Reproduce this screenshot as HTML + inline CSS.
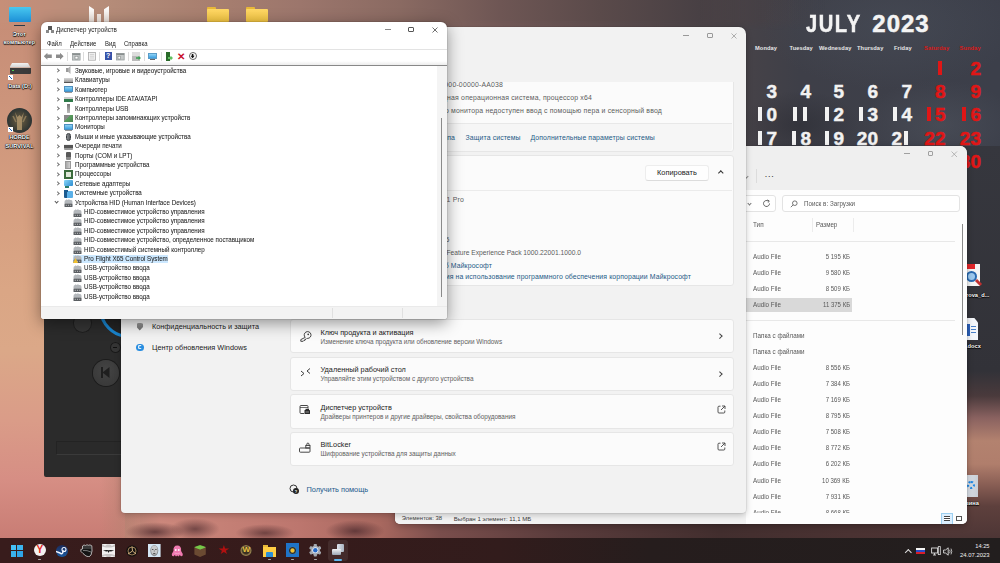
<!DOCTYPE html>
<html><head><meta charset="utf-8">
<style>
*{margin:0;padding:0;box-sizing:border-box}
html,body{width:1000px;height:563px;overflow:hidden;font-family:"Liberation Sans",sans-serif}
body{position:relative;background:#b8806f}
.a{position:absolute}
.t{position:absolute;white-space:nowrap;line-height:1}
#bg{left:0;top:0;width:1000px;height:563px;overflow:hidden}
.card{background:#fbfbfb;border:1px solid #e6e6e6;border-radius:3px}
.sv{font-size:6.9px;letter-spacing:0.18px;color:#5c5c5c;margin-top:1.2px}
.sl{font-size:6.9px;letter-spacing:0.1px;color:#245a86;margin-top:1.2px}
.sn{font-size:7.3px;color:#1b1b1b}
.st{font-size:7.3px;color:#1b1b1b}
.ss{font-size:6.4px;color:#606060}
.exr{transform:scaleX(0.9)!important;transform-origin:100% 0!important}
.ex{font-size:6.7px;color:#585858;transform:scaleX(0.94);transform-origin:0 0;margin-top:0.7px}
.dl{font-size:5.7px;font-weight:bold;color:#fff;text-shadow:0 0 1px #000,0 0 1px #000,0 1px 1px #000}
.cd{top:45.8px;font-size:5.7px;letter-spacing:0.1px;font-weight:bold}
.cn{font-size:19px;font-weight:bold;-webkit-text-stroke:0.45px currentColor}
.one{display:inline-block;width:10px;height:13.4px;vertical-align:-0.2px;background:linear-gradient(90deg,transparent 0 1.6px,currentColor 1.6px 6.2px,transparent 6.2px)}
.tind{top:21px;width:3px;height:1.4px;background:#aaa;border-radius:1px}
.dm{font-size:7px;color:#1c1c1c;transform:scaleX(0.89);transform-origin:0 0;margin-top:-0.5px;-webkit-text-stroke:0.05px #1c1c1c}
.mn{top:19.3px;font-size:6.8px;color:#1c1c1c;transform:scaleX(0.88);transform-origin:0 0}
.tsep{top:29.6px;width:1px;height:9.2px;background:#dcdcdc}
.chev{width:3.2px;height:3.2px;border-right:1px solid #777;border-top:1px solid #777;transform:rotate(45deg)}
.chevd{width:3.2px;height:3.2px;border-right:1px solid #555;border-bottom:1px solid #555;transform:rotate(45deg)}
</style></head><body>
<div id="bg" class="a">
  <div class="a" style="left:0;top:0;width:1000px;height:563px;background:linear-gradient(90deg,#c48b77 0%,#b88373 8%,#a77a6d 20%,#93706a 35%,#7a5f5d 50%,#5f5052 62%,#4a4448 72%,#3e3f48 80%,#3c3f4a 100%)"></div>
  <!-- left column -->
  <div class="a" style="left:0;top:0;width:125px;height:540px;background:linear-gradient(180deg,#c58c76 0px,#cc947b 100px,#d59e80 200px,#daa685 290px,#dba888 350px,#da9c88 420px,#d68e84 480px,#c87c74 540px)"></div>
  <div class="a" style="left:100px;top:0;width:40px;height:540px;background:linear-gradient(90deg,rgba(0,0,0,0),rgba(185,130,114,1))"></div>
  <!-- top strip -->
  <div class="a" style="left:0;top:0;width:825px;height:30px;background:linear-gradient(90deg,#c68f78 0px,#c08e7a 40px,#b88e7a 90px,#b08876 140px,#a98070 200px,#9c766c 300px,#8a6a62 400px,#6e5654 500px,#5a4a4a 600px,#484044 700px,rgba(60,61,68,0) 825px);-webkit-mask-image:linear-gradient(180deg,#000 0,#000 20px,transparent 30px)"></div>
  <!-- bottom strip -->
  <div class="a" style="left:0;top:470px;width:1000px;height:70px;background:linear-gradient(90deg,rgba(200,125,112,0) 0%,rgba(200,125,112,0) 12%,#cc887c 16%,#bc766e 30%,#a8685f 38%,#7a4e4c 44%,#5a3c3c 56%,#422e2e 72%,#4a3232 85%,#4e3434 100%)"></div>
  <div class="a" style="left:125px;top:522px;width:60px;height:20px;border-radius:50%;background:radial-gradient(ellipse at center,rgba(80,45,48,.8),rgba(80,45,48,0) 70%)"></div>
  <div class="a" style="left:170px;top:518px;width:50px;height:22px;border-radius:50%;background:radial-gradient(ellipse at center,rgba(80,45,48,.7),rgba(80,45,48,0) 70%)"></div>
  <div class="a" style="left:235px;top:524px;width:60px;height:18px;border-radius:50%;background:radial-gradient(ellipse at center,rgba(85,48,50,.75),rgba(85,48,50,0) 70%)"></div>
  <div class="a" style="left:325px;top:520px;width:60px;height:22px;border-radius:50%;background:radial-gradient(ellipse at center,rgba(80,45,48,.8),rgba(80,45,48,0) 70%)"></div>
  <!-- calendar texture -->
  <div class="a" style="left:760px;top:-40px;width:260px;height:130px;border-radius:50%;background:radial-gradient(ellipse at center,rgba(80,88,100,.35),rgba(80,88,100,0) 70%)"></div>
  <div class="a" style="left:740px;top:90px;width:120px;height:70px;border-radius:50%;background:radial-gradient(ellipse at center,rgba(30,30,36,.35),rgba(30,30,36,0) 70%)"></div>
  <div class="a" style="left:860px;top:80px;width:160px;height:90px;border-radius:50%;background:radial-gradient(ellipse at center,rgba(90,96,106,.35),rgba(90,96,106,0) 70%)"></div>
  <!-- right strip -->
  <div class="a" style="left:940px;top:146px;width:60px;height:394px;background:linear-gradient(180deg,#36373e 0px,#323238 225px,#4a3a3c 250px,#8a6260 272px,#b3826f 295px,#b07e6c 318px,#8a5f55 338px,#5e403d 360px,#4c3535 394px)"></div>
</div>

<!-- desktop icons left -->
<div id="desk-left">
  <!-- this PC -->
  <div class="a" style="left:9px;top:6.5px;width:21.5px;height:15px;background:linear-gradient(180deg,#48c8f0,#1d8fd6);border-radius:1px"></div>
  <div class="a" style="left:14px;top:25px;width:11px;height:1.2px;background:#2a3a4a"></div>
  <div class="t dl" style="left:0;width:39px;text-align:center;top:31.8px">Этот</div>
  <div class="t dl" style="left:0;width:39px;text-align:center;top:39.8px">компьютер</div>
  <!-- drive -->
  <div class="a" style="left:9.5px;top:63px;width:21px;height:4.5px;background:linear-gradient(#f2f2f2,#cfcfcf);clip-path:polygon(12% 0,88% 0,100% 100%,0 100%)"></div>
  <div class="a" style="left:9.5px;top:67.5px;width:21px;height:6px;background:#3b3b3b;border-radius:0 0 1px 1px"></div>
  <div class="a" style="left:12px;top:69.5px;width:1.5px;height:1.5px;background:#4fd04f"></div>
  <div class="a" style="left:7.5px;top:74.5px;width:5.5px;height:5.5px;background:#fff"></div>
  <div class="a" style="left:8.5px;top:75.5px;width:3.5px;height:3.5px;background:linear-gradient(45deg,transparent 40%,#1a5fb4 40% 60%,transparent 60%)"></div>
  <div class="t dl" style="left:0;width:40px;text-align:center;top:83.8px">Data (D:)</div>
  <!-- horde -->
  <div class="a" style="left:7px;top:108px;width:25px;height:25px;border-radius:50%;background:radial-gradient(circle at 50% 50%,#6a6048 0%,#4a4638 40%,#2c3434 70%,#1a2224 100%)"></div>
  <svg class="a" style="left:7px;top:108px" width="25" height="25" viewBox="0 0 25 25"><path d="M8 4 L10 12 L10 22 L15 22 L15 12 L17 4 L14.5 9 L12.5 7 L10.5 9 Z" fill="#a89068" opacity="0.9"/><path d="M6 8 L9 14 M19 8 L16 14" stroke="#8a7858" stroke-width="1.6"/></svg>
  <div class="a" style="left:7.5px;top:126.5px;width:5.5px;height:5.5px;background:#fff"></div>
  <div class="a" style="left:8.5px;top:127.5px;width:3.5px;height:3.5px;background:linear-gradient(45deg,transparent 40%,#1a5fb4 40% 60%,transparent 60%)"></div>
  <div class="t dl" style="left:0;width:39px;text-align:center;top:135.2px">HORDE</div>
  <div class="t dl" style="left:0;width:39px;text-align:center;top:144.2px">SURVIVAL</div>
  <!-- top icons -->
  <div class="a" style="left:89px;top:6px;width:5px;height:16px;background:linear-gradient(#fff,#eadfd8);clip-path:polygon(0 0,100% 20%,100% 100%,0 100%)"></div>
  <div class="a" style="left:97px;top:14px;width:4px;height:8px;background:#efe5df"></div>
  <div class="a" style="left:104px;top:6px;width:5px;height:16px;background:linear-gradient(#fff,#eadfd8);clip-path:polygon(0 20%,100% 0,100% 100%,0 100%)"></div>
  <div class="a" style="left:207px;top:7px;width:9px;height:3px;background:#e8b838;border-radius:1px 1px 0 0"></div>
  <div class="a" style="left:207px;top:9px;width:22px;height:13px;background:linear-gradient(#ffd866,#f2c440);border-radius:1px"></div>
  <div class="a" style="left:246px;top:7px;width:9px;height:3px;background:#e8b838;border-radius:1px 1px 0 0"></div>
  <div class="a" style="left:246px;top:9px;width:22px;height:13px;background:linear-gradient(#ffd866,#f2c440);border-radius:1px"></div>
  <!-- right desktop icons -->
  <div class="a" style="left:967px;top:264px;width:13px;height:22px;background:#f4f4f4"></div>
  <div class="a" style="left:967px;top:264px;width:8px;height:5px;background:#e0262a"></div>
  <div class="a" style="left:966px;top:271px;width:11px;height:11px;border-radius:50%;border:2px solid #2a6ab0;background:#9cc8ee"></div>
  <div class="a" style="left:975px;top:281px;width:7px;height:3px;background:#c03030;transform:rotate(45deg)"></div>
  <div class="t dl" style="left:966px;top:292.5px">rova_d...</div>
  <div class="a" style="left:966px;top:318px;width:12px;height:22px;background:#f4f6fa;clip-path:polygon(0 0,70% 0,100% 20%,100% 100%,0 100%)"></div>
  <div class="a" style="left:966px;top:324px;width:4px;height:12px;background:#2b5fb8"></div>
  <div class="a" style="left:971px;top:326px;width:5px;height:1px;background:#4a80c8;box-shadow:0 3px 0 #4a80c8,0 6px 0 #4a80c8"></div>
  <div class="t dl" style="left:966px;top:344px">.docx</div>
  <div class="a" style="left:966px;top:475px;width:12px;height:22px;background:linear-gradient(90deg,#dde3ea,#c8ced6)"></div>
  <div class="a" style="left:967px;top:481px;width:8px;height:8px;border-radius:50%;border:2px dotted #1e88e5"></div>
  <div class="t dl" style="left:966px;top:500.5px">зина</div>
</div>
<!-- calendar -->
<div id="cal">
  <div class="t" style="left:806px;top:11.8px;font-size:24px;font-weight:bold;color:#f4f4f4;letter-spacing:1.8px;transform:scaleX(0.84);transform-origin:0 0;-webkit-text-stroke:0.5px #f4f4f4">JULY</div>
  <div class="t" style="left:872.3px;top:11.8px;font-size:24px;font-weight:bold;color:#f4f4f4;letter-spacing:1px;-webkit-text-stroke:0.5px #f4f4f4">2023</div>
  <div class="t cd" style="left:755px;color:#e8e8e8">Monday</div>
  <div class="t cd" style="left:789.5px;color:#e8e8e8">Tuesday</div>
  <div class="t cd" style="left:819px;color:#e8e8e8">Wednesday</div>
  <div class="t cd" style="left:857px;color:#e8e8e8">Thursday</div>
  <div class="t cd" style="left:894px;color:#e8e8e8">Friday</div>
  <div class="t cd" style="left:924px;color:#d81818">Saturday</div>
  <div class="t cd" style="left:959.5px;color:#d81818">Sunday</div>
  <div class="t cn" style="right:54.5px;top:58.7px;color:#e01616"><span class="one"></span></div>
  <div class="t cn" style="right:19px;top:58.7px;color:#e01616">2</div>
  <div class="t cn" style="right:223px;top:82.2px;color:#f2f2f2">3</div>
  <div class="t cn" style="right:189px;top:82.2px;color:#f2f2f2">4</div>
  <div class="t cn" style="right:156px;top:82.2px;color:#f2f2f2">5</div>
  <div class="t cn" style="right:122px;top:82.2px;color:#f2f2f2">6</div>
  <div class="t cn" style="right:88px;top:82.2px;color:#f2f2f2">7</div>
  <div class="t cn" style="right:54.5px;top:82.2px;color:#e01616">8</div>
  <div class="t cn" style="right:19px;top:82.2px;color:#e01616">9</div>
  <div class="t cn" style="right:223px;top:104.5px;color:#f2f2f2"><span class="one"></span>0</div>
  <div class="t cn" style="right:189px;top:104.5px;color:#f2f2f2"><span class="one"></span><span class="one"></span></div>
  <div class="t cn" style="right:156px;top:104.5px;color:#f2f2f2"><span class="one"></span>2</div>
  <div class="t cn" style="right:122px;top:104.5px;color:#f2f2f2"><span class="one"></span>3</div>
  <div class="t cn" style="right:88px;top:104.5px;color:#f2f2f2"><span class="one"></span>4</div>
  <div class="t cn" style="right:54.5px;top:104.5px;color:#e01616"><span class="one"></span>5</div>
  <div class="t cn" style="right:19px;top:104.5px;color:#e01616"><span class="one"></span>6</div>
  <div class="t cn" style="right:223px;top:128.5px;color:#f2f2f2"><span class="one"></span>7</div>
  <div class="t cn" style="right:189px;top:128.5px;color:#f2f2f2"><span class="one"></span>8</div>
  <div class="t cn" style="right:156px;top:128.5px;color:#f2f2f2"><span class="one"></span>9</div>
  <div class="t cn" style="right:122px;top:128.5px;color:#f2f2f2">20</div>
  <div class="t cn" style="right:88px;top:128.5px;color:#f2f2f2">2<span class="one"></span></div>
  <div class="t cn" style="right:54.5px;top:128.5px;color:#e01616">22</div>
  <div class="t cn" style="right:19px;top:128.5px;color:#e01616">23</div>
  <div class="t cn" style="right:223px;top:151.7px;color:#f2f2f2">24</div>
  <div class="t cn" style="right:189px;top:151.7px;color:#f2f2f2">25</div>
  <div class="t cn" style="right:156px;top:151.7px;color:#f2f2f2">26</div>
  <div class="t cn" style="right:122px;top:151.7px;color:#f2f2f2">27</div>
  <div class="t cn" style="right:88px;top:151.7px;color:#f2f2f2">28</div>
  <div class="t cn" style="right:54.5px;top:151.7px;color:#e01616">29</div>
  <div class="t cn" style="right:19px;top:151.7px;color:#e01616">30</div>
</div>

<!-- media widget -->
<div class="a" style="left:44px;top:300px;width:80px;height:177px;background:#2b2b2b;border-radius:2px;overflow:hidden">
  <div class="a" style="left:28.7px;top:13.4px;width:19.2px;height:19.2px;border-radius:50%;background:#353535;box-shadow:inset 0 0 0 1px #1e1e1e"></div>
  <div class="a" style="left:55px;top:-22px;width:60px;height:60px;border-radius:50%;border:3.4px solid #1a86d0;box-sizing:border-box;background:#242424"></div>
  <div class="a" style="left:65.5px;top:41.5px;width:11px;height:11px;border-radius:50%;background:#353535;box-shadow:inset 0 0 0 1px #1a1a1a"></div>
  <div class="a" style="left:69px;top:46.5px;width:4px;height:1px;background:#111"></div>
  <div class="a" style="left:48.5px;top:59.7px;width:26px;height:26px;border-radius:50%;background:radial-gradient(circle at 50% 40%,#444,#363636);box-shadow:0 0 0 1px #1c1c1c"></div>
  <div class="a" style="left:57px;top:67px;width:1.5px;height:11px;background:#1f1f1f"></div>
  <div class="a" style="left:58.5px;top:67px;width:7px;height:11px;background:#1f1f1f;clip-path:polygon(100% 0,0 50%,100% 100%)"></div>
  <div class="a" style="left:12px;top:140.6px;width:70px;height:14px;background:#2a2a2a;border:1px solid #232323;border-bottom-color:#3a3a3a"></div>
</div>

<!-- explorer window -->
<div id="explorer" class="a" style="left:395px;top:146px;width:572px;height:378px;background:#fdfdfd;border-radius:7px 7px 5px 5px;box-shadow:0 2px 6px rgba(0,0,0,.25),0 0 0 1px rgba(0,0,0,.05);overflow:hidden">
  <div class="a" style="left:0;top:0;width:572px;height:43.5px;background:#efefef"></div>
  <div class="a" style="left:509px;top:7px;width:6px;height:1px;background:#a0a0a0"></div>
  <div class="a" style="left:533.4px;top:5px;width:5px;height:5px;border:0.9px solid #a0a0a0;border-radius:1px"></div>
  <svg class="a" style="left:556px;top:4.6px" width="6.5" height="6.5" viewBox="0 0 7 7"><path d="M0.6 0.6 L6.4 6.4 M6.4 0.6 L0.6 6.4" stroke="#a0a0a0" stroke-width="0.8"/></svg>
  <div class="a" style="left:350px;top:28.5px;width:3px;height:3px;border-right:1px solid #888;border-bottom:1px solid #888;transform:rotate(45deg)"></div>
  <div class="a" style="left:361px;top:23px;width:1px;height:14px;background:#dcdcdc"></div>
  <div class="t" style="left:369.5px;top:26px;font-size:9px;color:#333;letter-spacing:0.2px">&middot;&middot;&middot;</div>
  <!-- address -->
  <div class="a" style="left:340px;top:49px;width:40.6px;height:17px;background:#fff;border:1px solid #e3e3e3;border-radius:3px"></div>
  <div class="a" style="left:353.4px;top:55.5px;width:3px;height:3px;border-right:1px solid #777;border-bottom:1px solid #777;transform:rotate(45deg)"></div>
  <svg class="a" style="left:367px;top:53px" width="9" height="9" viewBox="0 0 9 9"><path d="M7.5 4.5 A3 3 0 1 1 6.3 2.1" fill="none" stroke="#555" stroke-width="0.9"/><path d="M5.4 0.9 L7.2 1.9 L6.2 3.6" fill="none" stroke="#555" stroke-width="0.9"/></svg>
  <div class="a" style="left:387.4px;top:49px;width:178px;height:17px;background:#fff;border:1px solid #e3e3e3;border-radius:3px"></div>
  <svg class="a" style="left:394.5px;top:54px" width="8" height="8" viewBox="0 0 8 8"><circle cx="4.8" cy="3.2" r="2.3" fill="none" stroke="#666" stroke-width="0.9"/><path d="M3.2 4.8 L0.8 7.2" stroke="#666" stroke-width="0.9"/></svg>
  <div class="t" style="left:408.6px;top:55.2px;font-size:6.6px;color:#5a5a5a;transform:scaleX(0.95);transform-origin:0 0">Поиск в: Загрузки</div>
  <!-- header -->
  <div class="t ex" style="left:358.2px;top:75.6px;font-size:6.8px">Тип</div>
  <div class="a" style="left:417px;top:72px;width:1px;height:13.5px;background:#ececec"></div>
  <div class="t ex" style="left:420.6px;top:75.6px;font-size:6.6px">Размер</div>
  <div class="a" style="left:458px;top:72px;width:1px;height:13.5px;background:#ececec"></div>
  <div class="a" style="left:340px;top:95.2px;width:220px;height:1px;background:#e8e8e8"></div>
  <div class="a" style="left:340px;top:151.8px;width:117px;height:14.2px;background:#d9d9d9"></div>
  <div class="a" style="left:340px;top:174.3px;width:220px;height:1px;background:#e8e8e8"></div>
<div class="t ex" style="left:358px;top:107.1px">Audio File</div>
<div class="t ex exr" style="right:117px;top:107.1px">5 195 КБ</div>
<div class="t ex" style="left:358px;top:123.1px">Audio File</div>
<div class="t ex exr" style="right:117px;top:123.1px">9 580 КБ</div>
<div class="t ex" style="left:358px;top:139.1px">Audio File</div>
<div class="t ex exr" style="right:117px;top:139.1px">8 509 КБ</div>
<div class="t ex" style="left:358px;top:155.3px">Audio File</div>
<div class="t ex exr" style="right:117px;top:155.3px">11 375 КБ</div>
<div class="t ex" style="left:358px;top:186.0px">Папка с файлами</div>
<div class="t ex" style="left:358px;top:202.0px">Папка с файлами</div>
<div class="t ex" style="left:358px;top:218.0px">Audio File</div>
<div class="t ex exr" style="right:117px;top:218.0px">8 556 КБ</div>
<div class="t ex" style="left:358px;top:234.1px">Audio File</div>
<div class="t ex exr" style="right:117px;top:234.1px">7 384 КБ</div>
<div class="t ex" style="left:358px;top:250.1px">Audio File</div>
<div class="t ex exr" style="right:117px;top:250.1px">7 169 КБ</div>
<div class="t ex" style="left:358px;top:266.3px">Audio File</div>
<div class="t ex exr" style="right:117px;top:266.3px">8 795 КБ</div>
<div class="t ex" style="left:358px;top:282.4px">Audio File</div>
<div class="t ex exr" style="right:117px;top:282.4px">7 508 КБ</div>
<div class="t ex" style="left:358px;top:298.5px">Audio File</div>
<div class="t ex exr" style="right:117px;top:298.5px">8 772 КБ</div>
<div class="t ex" style="left:358px;top:314.7px">Audio File</div>
<div class="t ex exr" style="right:117px;top:314.7px">6 202 КБ</div>
<div class="t ex" style="left:358px;top:330.9px">Audio File</div>
<div class="t ex exr" style="right:117px;top:330.9px">10 369 КБ</div>
<div class="t ex" style="left:358px;top:347.1px">Audio File</div>
<div class="t ex exr" style="right:117px;top:347.1px">7 931 КБ</div>
<div class="t ex" style="left:358px;top:363.1px">Audio File</div>
<div class="t ex exr" style="right:117px;top:363.1px">8 668 КБ</div>
  <div class="a" style="left:340px;top:367px;width:232px;height:11px;background:#fdfdfd"></div>
  <!-- scrollbar -->
  <div class="a" style="left:566.5px;top:78px;width:1px;height:111px;background:#8a8a8a"></div>
  <!-- status -->
  <div class="a" style="left:0;top:366px;width:351px;height:12px;background:#f2f2f2"></div>
  <div class="t" style="left:6.8px;top:370.2px;font-size:5.9px;color:#3c3c3c">Элементов: 38</div>
  <div class="t" style="left:58.8px;top:370.2px;font-size:6.05px;color:#3c3c3c">Выбран 1 элемент: 11,1 МБ</div>
  <div class="a" style="left:546px;top:366.8px;width:11.7px;height:12px;background:#dcefff;border:1px solid #9ccff0"></div>
  <div class="a" style="left:549px;top:369.5px;width:6px;height:5px;border-top:1px solid #444;border-bottom:1px solid #444;background:linear-gradient(#fff 0 40%,#444 40% 60%,#fff 60%)"></div>
  <div class="a" style="left:560.5px;top:369.6px;width:6.5px;height:5.4px;border:1px solid #555"></div>
</div>

<!-- settings window -->
<div id="settings" class="a" style="left:121px;top:27px;width:625px;height:486px;background:#f2f2f2;border-radius:7px 7px 4px 4px;box-shadow:0 2px 6px rgba(0,0,0,.22),0 0 0 1px rgba(0,0,0,.05);overflow:hidden">
  <div class="a" style="left:561.7px;top:8px;width:6.3px;height:0.9px;background:#999"></div>
  <div class="a" style="left:586px;top:6px;width:6px;height:5px;border:0.9px solid #999;border-radius:1px"></div>
  <svg class="a" style="left:609.7px;top:5.6px" width="6" height="6" viewBox="0 0 7 7"><path d="M0.6 0.6 L6.4 6.4 M6.4 0.6 L0.6 6.4" stroke="#999" stroke-width="0.9"/></svg>
  <!-- nav -->
  <div class="a" style="left:15.5px;top:295.5px;width:6.5px;height:8px;background:linear-gradient(#9a9a9a,#6a6a6a);clip-path:polygon(0 15%,50% 0,100% 15%,100% 55%,50% 100%,0 55%)"></div>
  <div class="t sn" style="left:31px;top:296px">Конфиденциальность и защита</div>
  <div class="a" style="left:15px;top:316.6px;width:7.6px;height:7.6px;border-radius:50%;background:#2a8ee0"></div>
  <div class="a" style="left:16.8px;top:318.4px;width:4px;height:4px;border-radius:50%;border:1px solid #fff;border-right-color:transparent"></div>
  <div class="t sn" style="left:31px;top:316.6px">Центр обновления Windows</div>
  <!-- scroll viewport -->
  <div class="a" style="left:0;top:55px;width:625px;height:431px;overflow:hidden">
   <div class="a" style="left:0;top:-55px;width:625px;height:486px">
    <!-- card A -->
    <div class="a card" style="left:168.5px;top:20px;width:444.5px;height:105px"></div>
    <div class="a" style="left:169.5px;top:96px;width:441.5px;height:28px;background:#f6f6f6;border-top:1px solid #e8e8e8;border-radius:0 0 4px 4px"></div>
    <div class="t sv" style="right:243px;top:54px">00330-80000-00000-AA038</div>
    <div class="t sv" style="right:154px;top:67.3px">64-разрядная операционная система, процессор x64</div>
    <div class="t sv" style="right:84px;top:80.1px">Для этого монитора недоступен ввод с помощью пера и сенсорный ввод</div>
    <div class="t sl" style="right:291px;top:106.8px">Домен или рабочая группа</div>
    <div class="t sl" style="left:344.6px;top:106.8px">Защита системы</div>
    <div class="t sl" style="left:409.4px;top:106.8px">Дополнительные параметры системы</div>
    <!-- card B -->
    <div class="a card" style="left:168.5px;top:128px;width:444.5px;height:131px"></div>
    <div class="a" style="left:169.5px;top:163px;width:441.5px;height:1px;background:#ebebeb"></div>
    <div class="a" style="left:524px;top:138px;width:64px;height:16px;background:#fefefe;border:1px solid #ededed;border-bottom-color:#dcdcdc;border-radius:3px"></div>
    <div class="t" style="left:536px;top:141.6px;font-size:7.4px;color:#1b1b1b">Копировать</div>
    <div class="a" style="left:597.5px;top:144.2px;width:3.6px;height:3.6px;border-left:1px solid #333;border-top:1px solid #333;transform:rotate(45deg)"></div>
    <div class="t sv" style="right:282px;top:169.3px">Windows 11 Pro</div>
    <div class="t sv" style="right:296.4px;top:208.9px">22621.1105</div>
    <div class="t sv" style="right:165px;top:221.7px;font-size:6.7px;letter-spacing:0">Windows Feature Experience Pack 1000.22001.1000.0</div>
    <div class="t sl" style="right:254px;top:235px">Соглашение об использовании служб Майкрософт</div>
    <div class="t sl" style="right:55px;top:246.3px">Условия лицензионного соглашения на использование программного обеспечения корпорации Майкрософт</div>
    <!-- related cards -->
    <div class="a card" style="left:168.5px;top:291.6px;width:444.5px;height:34.4px"></div>
    <div class="a card" style="left:168.5px;top:329.5px;width:444.5px;height:34.5px"></div>
    <div class="a card" style="left:168.5px;top:367px;width:444.5px;height:34.5px"></div>
    <div class="a card" style="left:168.5px;top:404.5px;width:444.5px;height:34.5px"></div>
    <div class="t st" style="left:199.5px;top:301.8px">Ключ продукта и активация</div>
    <div class="t ss" style="left:199.5px;top:311.7px">Изменение ключа продукта или обновление версии Windows</div>
    <div class="t st" style="left:199.5px;top:339.1px">Удаленный рабочий стол</div>
    <div class="t ss" style="left:199.5px;top:349.3px">Управляйте этим устройством с другого устройства</div>
    <div class="t st" style="left:199.5px;top:376.8px">Диспетчер устройств</div>
    <div class="t ss" style="left:199.5px;top:386.6px">Драйверы принтеров и другие драйверы, свойства оборудования</div>
    <div class="t st" style="left:199.5px;top:414.3px">BitLocker</div>
    <div class="t ss" style="left:199.5px;top:424px">Шифрование устройства для защиты данных</div>
    <!-- chevrons -->
    <div class="a" style="left:596.5px;top:307.3px;width:3.6px;height:3.6px;border-right:1px solid #444;border-top:1px solid #444;transform:rotate(45deg)"></div>
    <div class="a" style="left:596.5px;top:344.8px;width:3.6px;height:3.6px;border-right:1px solid #444;border-top:1px solid #444;transform:rotate(45deg)"></div>
    <!-- external link icons -->
    <svg class="a" style="left:595.5px;top:377.5px" width="9" height="9" viewBox="0 0 9 9"><path d="M3.5 1.2 H2 A1 1 0 0 0 1 2.2 V7 A1 1 0 0 0 2 8 H6.8 A1 1 0 0 0 7.8 7 V5.5" fill="none" stroke="#444" stroke-width="0.9"/><path d="M5 1 H8 V4 M8 1 L4 5" fill="none" stroke="#444" stroke-width="0.9"/></svg>
    <svg class="a" style="left:595.5px;top:415px" width="9" height="9" viewBox="0 0 9 9"><path d="M3.5 1.2 H2 A1 1 0 0 0 1 2.2 V7 A1 1 0 0 0 2 8 H6.8 A1 1 0 0 0 7.8 7 V5.5" fill="none" stroke="#444" stroke-width="0.9"/><path d="M5 1 H8 V4 M8 1 L4 5" fill="none" stroke="#444" stroke-width="0.9"/></svg>
    <!-- card icons -->
    <svg class="a" style="left:177.5px;top:303.5px" width="13" height="12" viewBox="0 0 13 12"><path d="M6.2 6.4 A3.4 3.4 0 1 1 8.6 7.4 L8 7.3 L7 8.3 L6 8.3 L6 9.3 L5 9.3 L4.2 10.3 L1.8 10.3 L1.8 8.6 Z" fill="none" stroke="#333" stroke-width="0.9" stroke-linejoin="round"/><circle cx="9.2" cy="3.4" r="0.8" fill="#333"/></svg>
    <svg class="a" style="left:178.5px;top:340px" width="11" height="11" viewBox="0 0 11 11"><path d="M1 4 L4 6.5 L1 9 M10 1.5 L7 4 L10 6.5" fill="none" stroke="#333" stroke-width="0.95"/></svg>
    <svg class="a" style="left:177.5px;top:377px" width="12" height="11" viewBox="0 0 12 11"><path d="M5 9.5 H2 A1 1 0 0 1 1 8.5 V2.5 A1 1 0 0 1 2 1.5 H8 A1 1 0 0 1 9 2.5 V4.5" fill="none" stroke="#333" stroke-width="0.9"/><path d="M1 3.5 H9" stroke="#333" stroke-width="0.7"/><rect x="5.5" y="6" width="5.5" height="4" rx="0.6" fill="#2a2a2a"/><rect x="6.5" y="4.8" width="3.5" height="1.5" fill="#2a2a2a"/><path d="M6.5 8 H10" stroke="#fff" stroke-width="0.5"/></svg>
    <svg class="a" style="left:178px;top:414.5px" width="12" height="11" viewBox="0 0 12 11"><rect x="0.5" y="6" width="10.5" height="4.2" rx="0.8" fill="none" stroke="#333" stroke-width="0.9"/><rect x="6.8" y="3.4" width="4.2" height="2.6" fill="none" stroke="#333" stroke-width="0.9"/><path d="M7.8 3.4 V2.2 A1.1 1.1 0 0 1 10 2.2 V3.4" fill="none" stroke="#333" stroke-width="0.9"/></svg>
    <!-- help -->
    <svg class="a" style="left:168px;top:457px" width="11" height="11" viewBox="0 0 11 11"><circle cx="4.5" cy="4.5" r="3.5" fill="none" stroke="#333" stroke-width="1"/><circle cx="7" cy="7" r="3" fill="#222"/><text x="7" y="9" font-size="4" fill="#fff" text-anchor="middle" font-family="Liberation Sans" font-weight="bold">?</text></svg>
    <div class="t" style="left:185.4px;top:458.6px;font-size:7.4px;color:#1e5a8c">Получить помощь</div>
   </div>
  </div>
</div>

<!-- device manager -->
<div id="devmgr" class="a" style="left:41px;top:22px;width:406px;height:297px;background:#fff;border-radius:6px 6px 3px 3px;box-shadow:0 4px 16px rgba(0,0,0,.42),0 0 0 1px rgba(0,0,0,.08);overflow:hidden">
  <!-- title icon -->
  <div class="a" style="left:7px;top:4px;width:4px;height:4px;background:#555"></div>
  <div class="a" style="left:5px;top:8px;width:8px;height:3px;background:linear-gradient(90deg,#888 0 35%,#fff 35% 65%,#888 65%)"></div>
  <div class="t" style="left:15px;top:4.4px;font-size:7px;color:#1a1a1a;transform:scaleX(0.89);transform-origin:0 0">Диспетчер устройств</div>
  <!-- caption buttons -->
  <div class="a" style="left:344px;top:7px;width:5.5px;height:1px;background:#888"></div>
  <div class="a" style="left:367px;top:5.3px;width:6px;height:5px;border:0.9px solid #555;border-radius:1px"></div>
  <svg class="a" style="left:391px;top:5px" width="6" height="6" viewBox="0 0 7 7"><path d="M0.6 0.6 L6.4 6.4 M6.4 0.6 L0.6 6.4" stroke="#444" stroke-width="0.9"/></svg>
  <!-- menu -->
  <div class="t mn" style="left:6px">Файл</div>
  <div class="t mn" style="left:29px">Действие</div>
  <div class="t mn" style="left:64px">Вид</div>
  <div class="t mn" style="left:82.7px">Справка</div>
  <div class="a" style="left:0;top:27px;width:406px;height:1px;background:#e3e3e3"></div>
  <!-- toolbar -->
  <div class="a" style="left:0;top:39px;width:406px;height:4px;background:linear-gradient(#fff,#ececec)"></div>
  <div class="a" style="left:0;top:43px;width:406px;height:1px;background:#888"></div>
  <div class="a" style="left:2.8px;top:30.8px;width:8px;height:7px;background:#8c8c8c;clip-path:polygon(0 50%,45% 0,45% 25%,100% 25%,100% 75%,45% 75%,45% 100%)"></div>
  <div class="a" style="left:14.6px;top:30.8px;width:8px;height:7px;background:#8c8c8c;clip-path:polygon(100% 50%,55% 0,55% 25%,0 25%,0 75%,55% 75%,55% 100%)"></div>
  <div class="a tsep" style="left:26.4px"></div>
  <svg class="a" style="left:31px;top:31.4px" width="8.5" height="7.5" viewBox="0 0 8.5 7.5"><rect x="0.4" y="0.4" width="7.7" height="6.7" fill="#c4c8c8" stroke="#9aa0a0" stroke-width="0.8"/><rect x="0.4" y="0.4" width="7.7" height="1.6" fill="#8a9090"/><rect x="3" y="3.2" width="3" height="2.8" fill="#fff" stroke="#6a7070" stroke-width="0.5"/></svg>
  <div class="a tsep" style="left:42.4px"></div>
  <svg class="a" style="left:46.5px;top:30px" width="8" height="8.6" viewBox="0 0 8 8.6"><rect x="0.4" y="0.4" width="7.2" height="7.8" fill="#f4f4f4" stroke="#a8a8a8" stroke-width="0.8"/><path d="M1.8 2.4 H6.2 M1.8 4.2 H6.2 M1.8 6 H6.2" stroke="#c0c0c0" stroke-width="0.7"/></svg>
  <div class="a tsep" style="left:58.4px"></div>
  <div class="a" style="left:63.8px;top:30px;width:6.8px;height:8px;background:#3652a8;color:#fff;font-size:7px;font-weight:bold;text-align:center;line-height:8px">?</div>
  <svg class="a" style="left:75px;top:31.4px" width="8.6" height="7.4" viewBox="0 0 8.6 7.4"><rect x="0.4" y="0.4" width="7.8" height="6.6" fill="#c4c8c8" stroke="#9aa0a0" stroke-width="0.8"/><rect x="0.4" y="0.4" width="7.8" height="1.6" fill="#8a9090"/><rect x="2" y="3.2" width="2.6" height="2.8" fill="#fff" stroke="#6a7070" stroke-width="0.5"/></svg>
  <div class="a tsep" style="left:86.75px"></div>
  <div class="a" style="left:91px;top:30px;width:8.4px;height:8.6px;background:linear-gradient(#ddd 0 50%,#bbb 50%)"></div>
  <div class="a" style="left:95px;top:34px;width:5px;height:4px;background:#3aa050;clip-path:polygon(0 30%,50% 30%,50% 0,100% 50%,50% 100%,50% 70%,0 70%)"></div>
  <div class="a tsep" style="left:102.5px"></div>
  <div class="a" style="left:107px;top:30.5px;width:9px;height:6px;background:linear-gradient(#8fd3f5,#3b9ee0);border:1px solid #5a9cc8"></div>
  <div class="a" style="left:109px;top:37px;width:5px;height:1px;background:#666"></div>
  <div class="a tsep" style="left:119.6px"></div>
  <div class="a" style="left:125px;top:30px;width:3.5px;height:8.6px;background:#2a6a2a"></div>
  <div class="a" style="left:127px;top:33.5px;width:5px;height:5px;background:#60c060;clip-path:polygon(0 30%,50% 30%,50% 0,100% 50%,50% 100%,50% 70%,0 70%)"></div>
  <div class="t" style="left:135.8px;top:29.6px;font-size:9.5px;font-weight:bold;color:#c8102e">&#x2715;</div>
  <div class="a" style="left:147.5px;top:30px;width:8.2px;height:8.2px;border:1px solid #666;border-radius:50%;background:#fff"></div>
  <div class="a" style="left:149.6px;top:31.8px;width:4px;height:4.6px;background:#111;clip-path:polygon(30% 0,70% 0,70% 45%,100% 45%,50% 100%,0 45%,30% 45%)"></div>
  <!-- tree -->
  <div class="a" style="left:0;top:44px;width:406px;height:240px;overflow:hidden">
  <div class="a" style="left:0;top:-44px;width:406px;height:284px">
<div class="a chev" style="left:15px;top:46.5px"></div>
<div class="a" style="left:24.5px;top:46px;width:3px;height:4px;background:#9a9a9a"></div><div class="a" style="left:26.5px;top:44px;width:3px;height:8px;background:#b0b0b0;clip-path:polygon(0 35%,100% 0,100% 100%,0 65%)"></div>
<div class="t dm" style="left:33.7px;top:45.4px">Звуковые, игровые и видеоустройства</div>
<div class="a chev" style="left:15px;top:56.5px"></div>
<div class="a" style="left:22.5px;top:56px;width:9px;height:5px;background:linear-gradient(#d8d8d8,#9c9c9c);border-bottom:1px solid #555"></div>
<div class="t dm" style="left:33.7px;top:54.8px">Клавиатуры</div>
<div class="a chev" style="left:15px;top:65.5px"></div>
<div class="a" style="left:22.5px;top:64px;width:9px;height:6px;background:linear-gradient(#8fd0f0,#3aa0e0);border:1px solid #4d8fbf"></div><div class="a" style="left:23.5px;top:70px;width:7px;height:1px;background:#999"></div>
<div class="t dm" style="left:33.7px;top:64.2px">Компьютер</div>
<div class="a chev" style="left:15px;top:75.5px"></div>
<div class="a" style="left:22.5px;top:75px;width:9px;height:5px;background:#2f7a4a;border-top:2px solid #ccc"></div>
<div class="t dm" style="left:33.7px;top:73.6px">Контроллеры IDE ATA/ATAPI</div>
<div class="a chev" style="left:15px;top:84.5px"></div>
<div class="a" style="left:25.5px;top:82px;width:3px;height:9px;background:linear-gradient(#777,#bbb)"></div>
<div class="t dm" style="left:33.7px;top:83.0px">Контроллеры USB</div>
<div class="a chev" style="left:15px;top:94.5px"></div>
<div class="a" style="left:22.5px;top:93px;width:9px;height:7px;background:linear-gradient(135deg,#888 40%,#5aa060 40%,#4a8050)"></div>
<div class="t dm" style="left:33.7px;top:92.4px">Контроллеры запоминающих устройств</div>
<div class="a chev" style="left:15px;top:103.5px"></div>
<div class="a" style="left:22.5px;top:102px;width:9px;height:6px;background:linear-gradient(#8fd0f0,#3aa0e0);border:1px solid #4d8fbf"></div><div class="a" style="left:23.5px;top:108px;width:7px;height:1px;background:#999"></div>
<div class="t dm" style="left:33.7px;top:101.8px">Мониторы</div>
<div class="a chev" style="left:15px;top:112.5px"></div>
<div class="a" style="left:24.5px;top:110.5px;width:5px;height:8.5px;background:linear-gradient(90deg,#8a8e92,#5a5e62);border:0.8px solid #3a3e42;border-radius:2.5px"></div>
<div class="t dm" style="left:33.7px;top:111.2px">Мыши и иные указывающие устройства</div>
<div class="a chev" style="left:15px;top:122.5px"></div>
<div class="a" style="left:22.5px;top:121.5px;width:9px;height:6.5px;background:linear-gradient(#f0f0f0 0 25%,#555 25% 60%,#9a9a9a 60%);border-radius:1px"></div>
<div class="t dm" style="left:33.7px;top:120.6px">Очереди печати</div>
<div class="a chev" style="left:15px;top:131.5px"></div>
<div class="a" style="left:24.5px;top:129.5px;width:5px;height:8px;background:linear-gradient(#5a5a5a 0 65%,#8a8a8a 65%);border-radius:1px"></div>
<div class="t dm" style="left:33.7px;top:130.0px">Порты (COM и LPT)</div>
<div class="a chev" style="left:15px;top:140.5px"></div>
<div class="a" style="left:24.0px;top:138.5px;width:5.5px;height:8.5px;background:linear-gradient(90deg,#a8a8a8,#d0d0d0);border:0.6px solid #999"></div>
<div class="t dm" style="left:33.7px;top:139.4px">Программные устройства</div>
<div class="a chev" style="left:15px;top:150.5px"></div>
<div class="a" style="left:22.5px;top:148px;width:9px;height:9px;background:#dfe8d8;border:2px solid #3b6b3b"></div>
<div class="t dm" style="left:33.7px;top:148.8px">Процессоры</div>
<div class="a chev" style="left:15px;top:159.5px"></div>
<div class="a" style="left:22.5px;top:157.5px;width:9px;height:6px;background:linear-gradient(135deg,#8ad8f8,#2a8ad0);border-radius:1px"></div><div class="a" style="left:23.5px;top:163.5px;width:4px;height:2px;background:#2a7a6a"></div>
<div class="t dm" style="left:33.7px;top:158.2px">Сетевые адаптеры</div>
<div class="a chev" style="left:15px;top:169.5px"></div>
<div class="a" style="left:22.5px;top:169.0px;width:9px;height:7px;background:linear-gradient(90deg,#1a5a90 0 30%,#5ab0e8 30%);border-radius:1px"></div><div class="a" style="left:22.5px;top:168.0px;width:4px;height:2px;background:#1a5a90"></div>
<div class="t dm" style="left:33.7px;top:167.6px">Системные устройства</div>
<div class="a chevd" style="left:14px;top:177.5px"></div>
<svg class="a" style="left:22.5px;top:176.5px" width="9" height="8.5" viewBox="0 0 9 8.5"><path d="M0.5 3 Q0.5 1 2 1 L2.5 0.3 L3.5 1 L5 0.3 L6 1 L7 1 Q8.5 1 8.5 3 V4.5 H0.5Z" fill="#b4b8bc"/><rect x="0.5" y="4.5" width="8" height="3.6" rx="0.6" fill="#5a5e62"/><path d="M1.8 6.3 H2.8 M4 6.3 H5 M6.2 6.3 H7.2" stroke="#e0e0e0" stroke-width="0.8"/></svg>
<div class="t dm" style="left:33.7px;top:177.0px">Устройства HID (Human Interface Devices)</div>
<svg class="a" style="left:32.0px;top:186.5px" width="9" height="8.5" viewBox="0 0 9 8.5"><path d="M0.5 3 Q0.5 1 2 1 L2.5 0.3 L3.5 1 L5 0.3 L6 1 L7 1 Q8.5 1 8.5 3 V4.5 H0.5Z" fill="#b4b8bc"/><rect x="0.5" y="4.5" width="8" height="3.6" rx="0.6" fill="#5a5e62"/><path d="M1.8 6.3 H2.8 M4 6.3 H5 M6.2 6.3 H7.2" stroke="#e0e0e0" stroke-width="0.8"/></svg>
<div class="t dm" style="left:43.2px;top:186.4px">HID-совместимое устройство управления</div>
<svg class="a" style="left:32.0px;top:195.5px" width="9" height="8.5" viewBox="0 0 9 8.5"><path d="M0.5 3 Q0.5 1 2 1 L2.5 0.3 L3.5 1 L5 0.3 L6 1 L7 1 Q8.5 1 8.5 3 V4.5 H0.5Z" fill="#b4b8bc"/><rect x="0.5" y="4.5" width="8" height="3.6" rx="0.6" fill="#5a5e62"/><path d="M1.8 6.3 H2.8 M4 6.3 H5 M6.2 6.3 H7.2" stroke="#e0e0e0" stroke-width="0.8"/></svg>
<div class="t dm" style="left:43.2px;top:195.8px">HID-совместимое устройство управления</div>
<svg class="a" style="left:32.0px;top:204.5px" width="9" height="8.5" viewBox="0 0 9 8.5"><path d="M0.5 3 Q0.5 1 2 1 L2.5 0.3 L3.5 1 L5 0.3 L6 1 L7 1 Q8.5 1 8.5 3 V4.5 H0.5Z" fill="#b4b8bc"/><rect x="0.5" y="4.5" width="8" height="3.6" rx="0.6" fill="#5a5e62"/><path d="M1.8 6.3 H2.8 M4 6.3 H5 M6.2 6.3 H7.2" stroke="#e0e0e0" stroke-width="0.8"/></svg>
<div class="t dm" style="left:43.2px;top:205.2px">HID-совместимое устройство управления</div>
<svg class="a" style="left:32.0px;top:214.5px" width="9" height="8.5" viewBox="0 0 9 8.5"><path d="M0.5 3 Q0.5 1 2 1 L2.5 0.3 L3.5 1 L5 0.3 L6 1 L7 1 Q8.5 1 8.5 3 V4.5 H0.5Z" fill="#b4b8bc"/><rect x="0.5" y="4.5" width="8" height="3.6" rx="0.6" fill="#5a5e62"/><path d="M1.8 6.3 H2.8 M4 6.3 H5 M6.2 6.3 H7.2" stroke="#e0e0e0" stroke-width="0.8"/></svg>
<div class="t dm" style="left:43.2px;top:214.6px">HID-совместимое устройство, определенное поставщиком</div>
<svg class="a" style="left:32.0px;top:223.5px" width="9" height="8.5" viewBox="0 0 9 8.5"><path d="M0.5 3 Q0.5 1 2 1 L2.5 0.3 L3.5 1 L5 0.3 L6 1 L7 1 Q8.5 1 8.5 3 V4.5 H0.5Z" fill="#b4b8bc"/><rect x="0.5" y="4.5" width="8" height="3.6" rx="0.6" fill="#5a5e62"/><path d="M1.8 6.3 H2.8 M4 6.3 H5 M6.2 6.3 H7.2" stroke="#e0e0e0" stroke-width="0.8"/></svg>
<div class="t dm" style="left:43.2px;top:224.0px">HID-совместимый системный контроллер</div>
<div class="a" style="left:31.7px;top:232.6px;width:95px;height:8.8px;background:#cce8ff"></div>
<svg class="a" style="left:32.0px;top:232.5px" width="9" height="8.5" viewBox="0 0 9 8.5"><path d="M0.5 3 Q0.5 1 2 1 L2.5 0.3 L3.5 1 L5 0.3 L6 1 L7 1 Q8.5 1 8.5 3 V4.5 H0.5Z" fill="#b4b8bc"/><rect x="0.5" y="4.5" width="8" height="3.6" rx="0.6" fill="#5a5e62"/><path d="M1.8 6.3 H2.8 M4 6.3 H5 M6.2 6.3 H7.2" stroke="#e0e0e0" stroke-width="0.8"/></svg><div class="a" style="left:32px;top:236px;width:5px;height:5px;background:#f0c030;clip-path:polygon(50% 0,100% 100%,0 100%)"></div>
<div class="t dm" style="left:43.2px;top:233.4px">Pro Flight X65 Control System</div>
<svg class="a" style="left:32.0px;top:242.5px" width="9" height="8.5" viewBox="0 0 9 8.5"><path d="M0.5 3 Q0.5 1 2 1 L2.5 0.3 L3.5 1 L5 0.3 L6 1 L7 1 Q8.5 1 8.5 3 V4.5 H0.5Z" fill="#b4b8bc"/><rect x="0.5" y="4.5" width="8" height="3.6" rx="0.6" fill="#5a5e62"/><path d="M1.8 6.3 H2.8 M4 6.3 H5 M6.2 6.3 H7.2" stroke="#e0e0e0" stroke-width="0.8"/></svg>
<div class="t dm" style="left:43.2px;top:242.8px">USB-устройство ввода</div>
<svg class="a" style="left:32.0px;top:251.5px" width="9" height="8.5" viewBox="0 0 9 8.5"><path d="M0.5 3 Q0.5 1 2 1 L2.5 0.3 L3.5 1 L5 0.3 L6 1 L7 1 Q8.5 1 8.5 3 V4.5 H0.5Z" fill="#b4b8bc"/><rect x="0.5" y="4.5" width="8" height="3.6" rx="0.6" fill="#5a5e62"/><path d="M1.8 6.3 H2.8 M4 6.3 H5 M6.2 6.3 H7.2" stroke="#e0e0e0" stroke-width="0.8"/></svg>
<div class="t dm" style="left:43.2px;top:252.2px">USB-устройство ввода</div>
<svg class="a" style="left:32.0px;top:261.5px" width="9" height="8.5" viewBox="0 0 9 8.5"><path d="M0.5 3 Q0.5 1 2 1 L2.5 0.3 L3.5 1 L5 0.3 L6 1 L7 1 Q8.5 1 8.5 3 V4.5 H0.5Z" fill="#b4b8bc"/><rect x="0.5" y="4.5" width="8" height="3.6" rx="0.6" fill="#5a5e62"/><path d="M1.8 6.3 H2.8 M4 6.3 H5 M6.2 6.3 H7.2" stroke="#e0e0e0" stroke-width="0.8"/></svg>
<div class="t dm" style="left:43.2px;top:261.6px">USB-устройство ввода</div>
<svg class="a" style="left:32.0px;top:270.5px" width="9" height="8.5" viewBox="0 0 9 8.5"><path d="M0.5 3 Q0.5 1 2 1 L2.5 0.3 L3.5 1 L5 0.3 L6 1 L7 1 Q8.5 1 8.5 3 V4.5 H0.5Z" fill="#b4b8bc"/><rect x="0.5" y="4.5" width="8" height="3.6" rx="0.6" fill="#5a5e62"/><path d="M1.8 6.3 H2.8 M4 6.3 H5 M6.2 6.3 H7.2" stroke="#e0e0e0" stroke-width="0.8"/></svg>
<div class="t dm" style="left:43.2px;top:271.0px">USB-устройство ввода</div>
  </div>
  </div>
  <!-- scrollbar -->
  <div class="a" style="left:396px;top:44px;width:10px;height:240px;background:#f4f4f4"></div>
  <div class="a" style="left:400.3px;top:96px;width:1px;height:179px;background:#8a8a8a"></div>
  <!-- status bar -->
  <div class="a" style="left:0;top:284px;width:406px;height:13px;background:#f3f3f3;border-top:1px solid #eaeaea"></div>
  <div class="a" style="left:291px;top:286px;width:1px;height:10px;background:#e0e0e0"></div>
  <div class="a" style="left:360.5px;top:286px;width:1px;height:10px;background:#e0e0e0"></div>
</div>

<!-- taskbar -->
<div id="taskbar" class="a" style="left:0;top:538px;width:1000px;height:25px;background:linear-gradient(90deg,#381c1c 0%,#361b1b 30%,#321c1c 50%,#261d1d 65%,#221e1e 100%)">
  <div class="a" style="left:10.8px;top:6.6px;width:5.6px;height:5.6px;background:#45c0f5"></div>
  <div class="a" style="left:17.2px;top:6.6px;width:5.6px;height:5.6px;background:#3bb4ef"></div>
  <div class="a" style="left:10.8px;top:13px;width:5.6px;height:5.6px;background:#3ab2ee"></div>
  <div class="a" style="left:17.2px;top:13px;width:5.6px;height:5.6px;background:#2fa5e8"></div>
  <div class="a" style="left:34px;top:6px;width:12.4px;height:12.4px;border-radius:50%;background:#f3f1f0"></div>
  <div class="t" style="left:36.6px;top:7px;font-size:10px;font-weight:bold;color:#e52620">Y</div>
  <div class="a tind" style="left:38.4px"></div>
  <svg class="a" style="left:56.4px;top:6.5px" width="12" height="12" viewBox="0 0 12 12"><defs><linearGradient id="stg" x1="0" y1="0" x2="0" y2="1"><stop offset="0" stop-color="#1c2a5a"/><stop offset="1" stop-color="#1a5aa0"/></linearGradient></defs><circle cx="6" cy="6" r="6" fill="url(#stg)"/><circle cx="8" cy="4.5" r="2" fill="none" stroke="#f2f6ff" stroke-width="1.1"/><path d="M0.4 6.6 L4 8 Q5.5 9.5 6.6 7.8 L7.2 6" stroke="#f2f6ff" stroke-width="1.5" fill="none" stroke-linecap="round"/></svg>
  <svg class="a" style="left:79.5px;top:5.5px" width="13" height="13.5" viewBox="0 0 13 13.5"><path d="M2.5 2 L4 1 L5.5 1.5 L7 0.8 L8.5 1.3 L10 0.9 L11.8 1.8 L12 7 L11 11 L9 12.8 L6 12 L3 9.5 L1 7.5 L0.8 5.5 L2.5 5 Z" fill="#141414" stroke="#d8d8d8" stroke-width="0.8"/><path d="M4 2 V5 M6 1.6 V5 M8 1.3 V5 M10 1.2 V5" stroke="#aaa" stroke-width="0.5"/><path d="M3 6.5 Q7 6 11 8" stroke="#bbb" stroke-width="0.6" fill="none"/></svg>
  <svg class="a" style="left:102px;top:5.5px" width="13.2" height="13.5" viewBox="0 0 13.2 13.5"><rect width="13.2" height="13.5" fill="#f2f0f0"/><path d="M0 0 L3 2 L5 0.5 L8 0.5 L10 2 L13.2 0 V2.5 L9 3.5 H4 L0 2.5Z M0 13.5 L3 11.5 L5 13 L8 13 L10 11.5 L13.2 13.5 V11 L9 10 H4 L0 11Z" fill="#c8c4c4"/><path d="M1 6.5 Q4 5.6 6.6 6.2 Q9 5.6 12.2 6.5 L9 7.4 L7.4 7.2 L6.6 9 L5.8 7.2 L4.2 7.4 Z" fill="#151515"/></svg>
  <svg class="a" style="left:126px;top:6.5px" width="12" height="12" viewBox="0 0 12 12"><circle cx="6" cy="6" r="5.8" fill="#161210"/><circle cx="6" cy="6" r="4" fill="none" stroke="#b89466" stroke-width="0.8"/><path d="M6 1.5 L6.5 6 L2 9 M6.5 6 L10 9" stroke="#d0b080" stroke-width="1" fill="none"/></svg>
  <svg class="a" style="left:148px;top:5.5px" width="12.6" height="13.5" viewBox="0 0 12.6 13.5"><rect width="12.6" height="13.5" fill="#d4e6f4"/><ellipse cx="6.3" cy="6.6" rx="4" ry="5.6" fill="#8a8c90"/><ellipse cx="6.3" cy="6" rx="3.2" ry="4.6" fill="#c8cacc"/><path d="M4 5.5 H5.4 M7.2 5.5 H8.6 M5.2 9.5 H7.4" stroke="#333" stroke-width="0.8"/><path d="M6.3 6 V8" stroke="#777" stroke-width="0.6"/></svg>
  <svg class="a" style="left:171px;top:6.5px" width="12.6" height="12" viewBox="0 0 12.6 12"><path d="M2.5 6 Q2 0.5 6.3 0.5 Q10.6 0.5 10.1 6 L11.8 9 Q12 11.5 10 11.2 L8.8 10 L7.6 11.5 L6.3 10.4 L5 11.5 L3.8 10 L2.6 11.2 Q0.6 11.5 0.8 9 Z" fill="#f07ab0"/><circle cx="4.8" cy="5" r="0.9" fill="#fff"/><circle cx="7.8" cy="5" r="0.9" fill="#fff"/><path d="M3.5 8 Q6.3 9.5 9 8" stroke="#fbb8d8" stroke-width="0.6" fill="none"/></svg>
  <div class="a" style="left:194.4px;top:7px;width:11.4px;height:5px;background:#6fbf45;clip-path:polygon(50% 0,100% 40%,50% 100%,0 40%)"></div>
  <div class="a" style="left:194.4px;top:9px;width:11.4px;height:10px;background:#6b4a32;clip-path:polygon(0 0,50% 25%,100% 0,100% 75%,50% 100%,0 75%)"></div>
  <div class="a" style="left:194.4px;top:7.5px;width:11.4px;height:4px;background:#78c84a;clip-path:polygon(50% 0,100% 50%,50% 100%,0 50%)"></div>
  <div class="a" style="left:218.4px;top:7px;width:11px;height:10px;background:#b01010;clip-path:polygon(50% 0,61% 35%,98% 35%,68% 57%,79% 91%,50% 70%,21% 91%,32% 57%,2% 35%,39% 35%)"></div>
  <div class="a" style="left:240.2px;top:6.6px;width:12px;height:11.4px;border-radius:50%;background:radial-gradient(circle,#3a3020 40%,#9a8050 60%,#2a2418 75%)"></div>
  <div class="t" style="left:242.6px;top:8.4px;font-size:8px;font-weight:bold;color:#e8c040">W</div>
  <div class="a" style="left:263px;top:7px;width:5px;height:2px;background:#e8b838"></div>
  <div class="a" style="left:263px;top:8.5px;width:12.6px;height:10.5px;background:#ffce44"></div>
  <div class="a" style="left:265.5px;top:13.5px;width:7.6px;height:5.5px;background:#2a8fd8;border-radius:1px 1px 0 0"></div>
  <div class="a tind" style="left:267.5px"></div>
  <div class="a" style="left:285.8px;top:5.4px;width:13.2px;height:13.6px;background:#1f74c8"></div>
  <div class="a" style="left:288.5px;top:8.5px;width:7.6px;height:7.6px;border-radius:50%;background:#f2c230;box-shadow:inset 0 0 0 1.3px #1a2a40"></div>
  <div class="a tind" style="left:290.8px"></div>
  <svg class="a" style="left:308.6px;top:6px" width="12.6" height="12.6" viewBox="0 0 12.6 12.6"><g transform="translate(6.3 6.3)" fill="#a4a8b0"><circle r="4.6"/><rect x="-1.6" y="-6.3" width="3.2" height="12.6" rx="0.8"/><rect x="-1.6" y="-6.3" width="3.2" height="12.6" rx="0.8" transform="rotate(60)"/><rect x="-1.6" y="-6.3" width="3.2" height="12.6" rx="0.8" transform="rotate(120)"/></g><circle cx="6.3" cy="6.3" r="3" fill="#e8eef8"/><circle cx="6.3" cy="6.3" r="2.2" fill="#2468c8"/></svg>
  <div class="a tind" style="left:313.7px"></div>
  <div class="a" style="left:327.8px;top:1.8px;width:20.4px;height:21.2px;background:rgba(255,255,255,.07);border-radius:3px"></div>
  <div class="a" style="left:336.5px;top:6px;width:7px;height:8px;background:linear-gradient(90deg,#dfe6ee,#aab4c0);border-radius:1px"></div>
  <div class="a" style="left:332px;top:11px;width:9px;height:5.5px;background:linear-gradient(#f2f4f6,#9aa6b4);border-radius:1px"></div>
  <div class="a" style="left:334.4px;top:21px;width:8px;height:1.6px;background:#5cb8f2;border-radius:1px"></div>
  <!-- tray -->
  <div class="a" style="left:905.8px;top:11.5px;width:4.6px;height:4.6px;border-left:1px solid #ddd;border-top:1px solid #ddd;transform:rotate(45deg)"></div>
  <div class="a" style="left:916px;top:9.5px;width:9px;height:6.6px;background:linear-gradient(#f4f4f4 0 33%,#2a4ac8 33% 66%,#d81e2a 66%)"></div>
  <svg class="a" style="left:930.5px;top:7.5px" width="10" height="10" viewBox="0 0 10 10"><rect x="0.6" y="2" width="6" height="5" fill="none" stroke="#ddd" stroke-width="0.9"/><path d="M2 9 H5 M3.5 7 V9" stroke="#ddd" stroke-width="0.9"/><rect x="7.3" y="0.6" width="2" height="8" fill="none" stroke="#ddd" stroke-width="0.8"/></svg>
  <svg class="a" style="left:942.5px;top:8.5px" width="10" height="9" viewBox="0 0 10 9"><path d="M0.6 3 H2.5 L5.2 0.8 V8.2 L2.5 6 H0.6 Z" fill="none" stroke="#ddd" stroke-width="0.9"/><path d="M6.6 2.8 Q7.6 4.5 6.6 6.2 M8 1.6 Q9.6 4.5 8 7.4" stroke="#ddd" stroke-width="0.8" fill="none"/></svg>
  <div class="t" style="right:10.5px;top:6.4px;font-size:5.7px;color:#f0f0f0">14:25</div>
  <div class="t" style="right:10.5px;top:15px;font-size:5.9px;color:#f0f0f0">24.07.2023</div>
</div>
</body></html>
